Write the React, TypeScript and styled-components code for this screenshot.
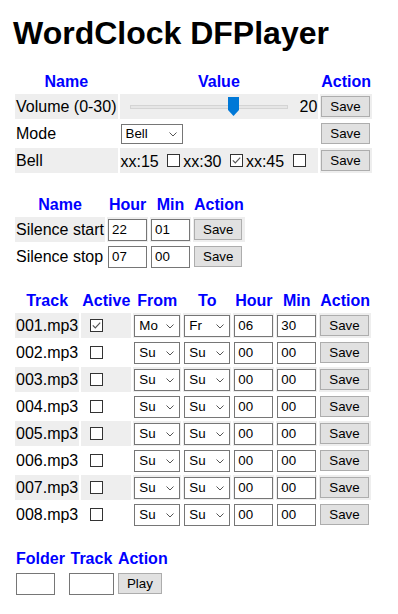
import React from 'react'
import styled, { createGlobalStyle } from 'styled-components'

const GlobalStyle = createGlobalStyle`
  body {
    margin: 0;
    background: #fff;
    color: #000;
    font-family: "Liberation Sans", Arial, sans-serif;
    font-size: 16px;
  }
`

const Page = styled.div`
  display: flex;
  flex-direction: column;
  align-items: flex-start;
  gap: 18px;
  padding: 15px 13px;
`

const Title = styled.h1`
  margin: 0;
  font-size: 32px;
  line-height: 37px;
  font-weight: bold;
`

const Table = styled.table<{ $striped?: boolean }>`
  border-collapse: separate;
  border-spacing: 2px;
  font-size: 16px;

  tbody tr:nth-child(odd) td {
    background: ${({ $striped }) => ($striped ? '#eeeeee' : 'transparent')};
  }
`

const Th = styled.th`
  padding: 1px;
  color: #0000ff;
  font-weight: bold;
  text-align: center;
  white-space: nowrap;
`

const Row = styled.tr`
  height: 25px;
`

const Td = styled.td<{ $pl?: number }>`
  padding: 1px;
  padding-left: ${({ $pl }) => ($pl ? $pl : 1)}px;
  white-space: nowrap;
  vertical-align: middle;
`

const ValueLine = styled.div`
  display: flex;
  align-items: center;
`

const SliderBox = styled.div`
  position: relative;
  display: flex;
  align-items: center;
  width: 158px;
  height: 21px;
  margin-left: 9px;
`

const Track = styled.div`
  width: 100%;
  height: 4px;
  box-sizing: border-box;
  background: #e6e6e6;
  border: 1px solid #d4d4d4;
`

const Thumb = styled.svg`
  position: absolute;
  top: 1px;
  width: 11px;
  height: 19px;
`

const Num = styled.span`
  margin-left: 12px;
`

const SelectWrap = styled.span<{ $w: number; $h: number }>`
  position: relative;
  display: inline-block;
  vertical-align: middle;
  width: ${({ $w }) => $w}px;
  height: ${({ $h }) => $h}px;
`

const Select = styled.select`
  appearance: none;
  box-sizing: border-box;
  width: 100%;
  height: 100%;
  margin: 0;
  padding: 0 0 0 4px;
  border: 1px solid #767676;
  border-radius: 0;
  background: #fff;
  color: #000;
  font: 13.33px "Liberation Sans", Arial, sans-serif;
  outline: none;
`

const Chevron = styled.svg`
  position: absolute;
  right: 6px;
  top: 50%;
  margin-top: -2px;
  width: 8px;
  height: 5px;
  pointer-events: none;
`

const TextInput = styled.input<{ $w?: number }>`
  box-sizing: border-box;
  width: ${({ $w }) => $w ?? 39}px;
  height: 22px;
  margin: 0;
  padding: 0 3px;
  border: 1px solid #767676;
  border-radius: 0;
  background: #fff;
  color: #000;
  font: 13.33px "Liberation Sans", Arial, sans-serif;
  vertical-align: middle;
  outline: none;
`

const Button = styled.button`
  box-sizing: border-box;
  height: 21px;
  margin: 0;
  padding: 0 8px;
  border: 1px solid #adadad;
  border-radius: 0;
  background: #e1e1e1;
  color: #000;
  font: 13.33px "Liberation Sans", Arial, sans-serif;
  vertical-align: middle;
`

const Box = styled.svg`
  display: inline-block;
  width: 13px;
  height: 13px;
  margin: 3px 3px 0 4px;
  vertical-align: baseline;
`

const Check = ({ on }: { on?: boolean }) => (
  <Box viewBox="0 0 13 13">
    <rect x="0.5" y="0.5" width="12" height="12" fill="#fff" stroke="#333" />
    {on && <polyline points="2.8,6.3 5.3,8.8 10.2,3.6" fill="none" stroke="#555" strokeWidth="1.2" />}
  </Box>
)

const days = ['Mo', 'Tu', 'We', 'Th', 'Fr', 'Sa', 'Su']

const Dropdown = ({ value, options, w, h }: { value: string; options: string[]; w: number; h: number }) => (
  <SelectWrap $w={w} $h={h}>
    <Select defaultValue={value}>
      {options.map((o) => (
        <option key={o}>{o}</option>
      ))}
    </Select>
    <Chevron viewBox="0 0 8 5">
      <polyline points="0.5,0.5 4,4 7.5,0.5" fill="none" stroke="#555" strokeWidth="1" />
    </Chevron>
  </SelectWrap>
)

const Slider = ({ value, max }: { value: number; max: number }) => (
  <SliderBox>
    <Track />
    <Thumb viewBox="0 0 11 19" style={{ left: ((158 - 11) * value) / max }}>
      <polygon points="0,0 11,0 11,13 5.5,19 0,13" fill="#0078d7" />
    </Thumb>
  </SliderBox>
)

const tracks = [
  { name: '001.mp3', on: true, from: 'Mo', to: 'Fr', hour: '06', min: '30' },
  { name: '002.mp3', on: false, from: 'Su', to: 'Su', hour: '00', min: '00' },
  { name: '003.mp3', on: false, from: 'Su', to: 'Su', hour: '00', min: '00' },
  { name: '004.mp3', on: false, from: 'Su', to: 'Su', hour: '00', min: '00' },
  { name: '005.mp3', on: false, from: 'Su', to: 'Su', hour: '00', min: '00' },
  { name: '006.mp3', on: false, from: 'Su', to: 'Su', hour: '00', min: '00' },
  { name: '007.mp3', on: false, from: 'Su', to: 'Su', hour: '00', min: '00' },
  { name: '008.mp3', on: false, from: 'Su', to: 'Su', hour: '00', min: '00' },
]

const App: React.FC = () => {
  return (
    <Page>
      <GlobalStyle />
      <Title>WordClock DFPlayer</Title>

      <Table $striped>
        <thead>
          <tr>
            <Th>Name</Th>
            <Th>Value</Th>
            <Th>Action</Th>
          </tr>
        </thead>
        <tbody>
          <Row>
            <Td>Volume (0-30)</Td>
            <Td>
              <ValueLine>
                <Slider value={20} max={30} />
                <Num>20</Num>
              </ValueLine>
            </Td>
            <Td>
              <Button>Save</Button>
            </Td>
          </Row>
          <Row>
            <Td>Mode</Td>
            <Td>
              <Dropdown value="Bell" options={['Off', 'Bell', 'Track']} w={62} h={20} />
            </Td>
            <Td>
              <Button>Save</Button>
            </Td>
          </Row>
          <Row>
            <Td>Bell</Td>
            <Td>
              xx:15{' '}
              <Check />
              xx:30{' '}
              <Check on />
              xx:45{' '}
              <Check />
            </Td>
            <Td>
              <Button>Save</Button>
            </Td>
          </Row>
        </tbody>
      </Table>

      <Table $striped>
        <thead>
          <tr>
            <Th>Name</Th>
            <Th>Hour</Th>
            <Th>Min</Th>
            <Th>Action</Th>
          </tr>
        </thead>
        <tbody>
          <Row>
            <Td>Silence start</Td>
            <Td>
              <TextInput defaultValue="22" />
            </Td>
            <Td>
              <TextInput defaultValue="01" />
            </Td>
            <Td>
              <Button>Save</Button>
            </Td>
          </Row>
          <Row>
            <Td>Silence stop</Td>
            <Td>
              <TextInput defaultValue="07" />
            </Td>
            <Td>
              <TextInput defaultValue="00" />
            </Td>
            <Td>
              <Button>Save</Button>
            </Td>
          </Row>
        </tbody>
      </Table>

      <Table $striped>
        <thead>
          <tr>
            <Th>Track</Th>
            <Th>Active</Th>
            <Th>From</Th>
            <Th>To</Th>
            <Th>Hour</Th>
            <Th>Min</Th>
            <Th>Action</Th>
          </tr>
        </thead>
        <tbody>
          {tracks.map((t) => (
            <Row key={t.name}>
              <Td>{t.name}</Td>
              <Td $pl={5}>
                <Check on={t.on} />
              </Td>
              <Td>
                <Dropdown value={t.from} options={days} w={46} h={22} />
              </Td>
              <Td>
                <Dropdown value={t.to} options={days} w={46} h={22} />
              </Td>
              <Td>
                <TextInput defaultValue={t.hour} />
              </Td>
              <Td>
                <TextInput defaultValue={t.min} />
              </Td>
              <Td>
                <Button>Save</Button>
              </Td>
            </Row>
          ))}
        </tbody>
      </Table>

      <Table>
        <thead>
          <tr>
            <Th>Folder</Th>
            <Th>Track</Th>
            <Th>Action</Th>
          </tr>
        </thead>
        <tbody>
          <Row>
            <Td>
              <TextInput />
            </Td>
            <Td>
              <TextInput $w={45} />
            </Td>
            <Td>
              <Button>Play</Button>
            </Td>
          </Row>
        </tbody>
      </Table>
    </Page>
  )
}

export default App
